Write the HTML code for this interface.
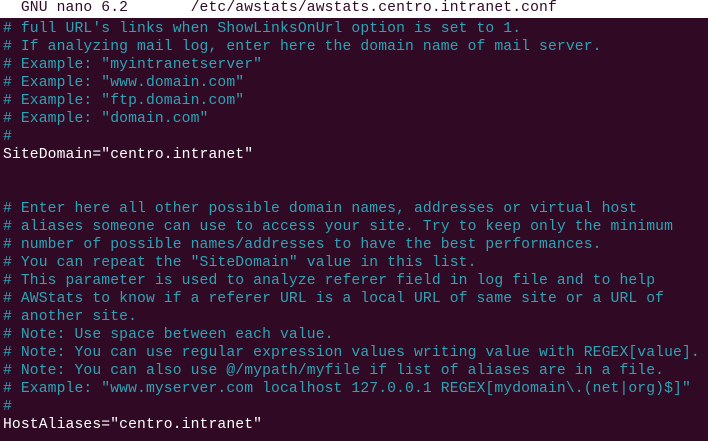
<!DOCTYPE html>
<html><head><meta charset="utf-8"><style>
html,body{margin:0;padding:0;background:#300a24;width:708px;height:441px;overflow:hidden}
.t{background:#fff;color:#300a24;height:18px;}
pre{margin:0;padding:0 0 0 3px;font-family:"Liberation Mono","DejaVu Sans Mono",monospace;font-size:14.7px;line-height:18px;color:#fff;white-space:pre;letter-spacing:0.12px}
.t pre{color:#300a24;position:relative;top:-1px}
.b{position:relative;top:2px}
.c{color:#2ea3b5}
</style></head><body><div class="t"><pre>  GNU nano 6.2       /etc/awstats/awstats.centro.intranet.conf</pre></div><pre class="b"><span class="c"># full URL's links when ShowLinksOnUrl option is set to 1.
# If analyzing mail log, enter here the domain name of mail server.
# Example: "myintranetserver"
# Example: "www.domain.com"
# Example: "ftp.domain.com"
# Example: "domain.com"
#</span>
SiteDomain="centro.intranet"


<span class="c"># Enter here all other possible domain names, addresses or virtual host
# aliases someone can use to access your site. Try to keep only the minimum
# number of possible names/addresses to have the best performances.
# You can repeat the "SiteDomain" value in this list.
# This parameter is used to analyze referer field in log file and to help
# AWStats to know if a referer URL is a local URL of same site or a URL of
# another site.
# Note: Use space between each value.
# Note: You can use regular expression values writing value with REGEX[value].
# Note: You can also use @/mypath/myfile if list of aliases are in a file.
# Example: "www.myserver.com localhost 127.0.0.1 REGEX[mydomain\.(net|org)$]"
#</span>
HostAliases="centro.intranet"</pre></body></html>
